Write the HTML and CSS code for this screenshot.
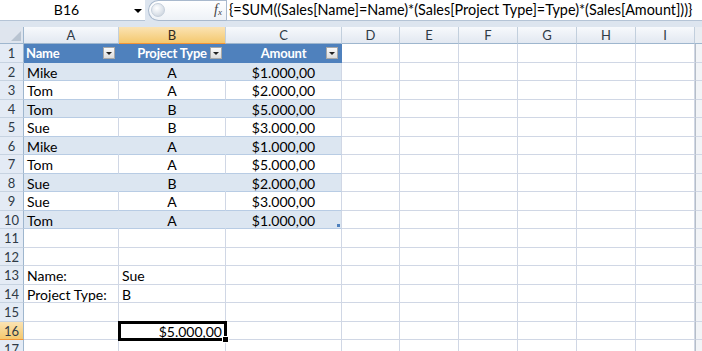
FILE: index.html
```html
<!DOCTYPE html>
<html lang="en">
<head>
  <meta charset="UTF-8" />
  <meta name="viewport" content="width=device-width, initial-scale=1.0"/>
  <title>Sales - SUM array formula</title>
  <link rel="stylesheet" href="styles.css">
</head>
<body>
  <div class="toolbar">
    <div class="formula-bar">
      <div class="name-box">
        <span class="name-text">B16</span>
        <span class="name-arrow"></span>
      </div>
      <div class="fx-box">
        <span class="fx-knob"></span>
        <span class="fx-label">f<sub>x</sub></span>
      </div>
      <div class="formula">{=SUM((Sales[Name]=Name)*(Sales[Project Type]=Type)*(Sales[Amount]))}</div>
    </div>
  </div>

  <div class="sheet" id="sheet"></div>

  <script>
    const COLS = ['A', 'B', 'C', 'D', 'E', 'F', 'G', 'H', 'I'];
    const sales = [
      ['Mike', 'A', '$1.000,00'],
      ['Tom', 'A', '$2.000,00'],
      ['Tom', 'B', '$5.000,00'],
      ['Sue', 'B', '$3.000,00'],
      ['Mike', 'A', '$1.000,00'],
      ['Tom', 'A', '$5.000,00'],
      ['Sue', 'B', '$2.000,00'],
      ['Sue', 'A', '$3.000,00'],
      ['Tom', 'A', '$1.000,00']
    ];
    const extra = {
      13: ['Name:', 'Sue'],
      14: ['Project Type:', 'B']
    };

    const sheet = document.getElementById('sheet');

    function cell(cls, text) {
      const div = document.createElement('div');
      div.className = cls;
      if (text !== undefined) div.textContent = text;
      sheet.appendChild(div);
      return div;
    }

    // kolom header
    cell('corner');
    COLS.forEach(c => cell(c === 'B' ? 'colhead active' : 'colhead', c));
    cell('colhead edge');

    for (let r = 1; r <= 17; r++) {
      cell(r === 16 ? 'rowhead active' : 'rowhead', r);

      if (r === 1) {
        ['Name', 'Project Type', 'Amount'].forEach((h, i) => {
          const th = cell('cell t-head ' + ['left', 'center', 'center'][i]);
          th.innerHTML = `<span>${h}</span><span class="filter"></span>`;
        });
      } else if (r <= 10) {
        const row = sales[r - 2];
        const band = r % 2 === 0 ? ' band' : '';
        cell('cell t-row left' + band, row[0]);
        cell('cell t-row center' + band, row[1]);
        const last = cell('cell t-row center t-last' + band, row[2]);
        if (r === 10) last.innerHTML += '<span class="resize"></span>';
      } else if (extra[r]) {
        cell('cell left', extra[r][0]);
        cell('cell left', extra[r][1]);
        cell('cell');
      } else if (r === 16) {
        cell('cell');
        cell('cell right selected', '$5.000,00').innerHTML += '<span class="handle"></span>';
        cell('cell');
      } else {
        cell('cell'); cell('cell'); cell('cell');
      }

      for (let i = 3; i < COLS.length; i++) cell('cell');
      cell('cell edge');
    }
  </script>
</body>
</html>
```

FILE: styles.css
```css
body {
  margin: 0;
  width: 702px;
  height: 351px;
  overflow: hidden;
  font-family: Lato, "Open Sans", sans-serif;
  font-size: 14px;
  background: #fff;
  color: #000;
}

/* formula bar */
.toolbar {
  background: #dde5ef;
  padding-bottom: 6px;
}

.formula-bar {
  display: flex;
  height: 21px;
}

.name-box {
  position: relative;
  width: 145px;
  background: #fff;
  border-bottom: 1px solid #b5c4d6;
  box-sizing: border-box;
}

.name-text {
  display: block;
  width: 133px;
  text-align: center;
  line-height: 20px;
}

.name-arrow {
  position: absolute;
  right: 3px;
  top: 9px;
  border-left: 4px solid transparent;
  border-right: 4px solid transparent;
  border-top: 4px solid #000;
}

.fx-box {
  position: relative;
  width: 78px;
  margin-left: 3px;
  box-sizing: border-box;
  border: 1px solid #a9b9cd;
  border-right: none;
  border-radius: 11px 0 0 11px;
  background: linear-gradient(#ffffff, #eef2f7);
}

.fx-knob {
  position: absolute;
  left: 2px;
  top: 2px;
  width: 14px;
  height: 14px;
  border-radius: 50%;
  background: radial-gradient(circle at 40% 35%, #ffffff 0, #e4e9ef 45%, #c3ccd7 100%);
  border: 1px solid #c5cfdb;
  box-sizing: border-box;
}

.fx-label {
  position: absolute;
  right: 4px;
  top: 1px;
  font-family: "Liberation Serif", serif;
  font-style: italic;
  font-size: 14px;
  color: #444;
}

.fx-label sub {
  font-size: 9px;
  vertical-align: -1px;
}

.formula {
  flex: 1;
  background: #fff;
  border-left: 1px solid #a9b9cd;
  border-bottom: 1px solid #b5c4d6;
  padding-left: 2px;
  font-size: 14.4px;
  line-height: 20px;
  white-space: nowrap;
  overflow: hidden;
}

/* sheet grid */
.sheet {
  display: grid;
  grid-template-columns: 24px 95px 107px 116px 58px 59px 59px 59px 59px 59px 7px;
  grid-template-rows: 17px;
  grid-auto-rows: 18.5px;
}

.corner {
  position: relative;
  background: #dfe5ee;
  border-right: 1px solid #9eb6ce;
  border-bottom: 1px solid #9eb6ce;
}

.corner::after {
  content: "";
  position: absolute;
  right: 2px;
  bottom: 2px;
  border-left: 10px solid transparent;
  border-bottom: 10px solid #b9c4d1;
}

.colhead {
  background: linear-gradient(#f7f9fc, #e2e8f1);
  border-right: 1px solid #c2cfdd;
  border-bottom: 1px solid #9eb6ce;
  text-align: center;
  font-size: 13px;
  line-height: 16px;
  color: #2f3a46;
}

.colhead.active {
  background: linear-gradient(#fbe3b3, #f4c86e);
  border-bottom-color: #f29536;
  color: #2f2a20;
}

.colhead.edge {
  border-right: none;
  background: #e9edf2;
}

.rowhead {
  background: #e4ebf5;
  border-right: 1px solid #9eb6ce;
  border-bottom: 1px solid #c7d3e1;
  text-align: center;
  font-size: 13px;
  line-height: 19px;
  color: #2f3a46;
}

.rowhead.active {
  background: linear-gradient(#fbe3b3, #f4c86e);
  border-bottom-color: #f29536;
}

.cell {
  position: relative;
  border-right: 1px solid #d0d7e5;
  border-bottom: 1px solid #d0d7e5;
  line-height: 19px;
  padding: 0 3px;
  white-space: nowrap;
  overflow: visible;
}

.cell.edge {
  border-right: none;
  border-left: 1px solid #b6bec8;
  background: #f2f4f7;
  padding: 0;
}

.left { text-align: left; }
.center { text-align: center; }
.right { text-align: right; }

/* table */
.t-head {
  background: #4f81bd;
  border-right-color: #4f81bd;
  border-bottom-color: #4f81bd;
  color: #fff;
  font-weight: bold;
  font-size: 13px;
  letter-spacing: -0.2px;
}

.t-head.left { padding-left: 2px; }

.filter {
  position: absolute;
  right: 3px;
  top: 3px;
  width: 12px;
  height: 12px;
  box-sizing: border-box;
  border: 1px solid #a8a8a8;
  background: linear-gradient(#fbfbfb, #dcdcdc);
}

.filter::after {
  content: "";
  position: absolute;
  left: 2px;
  top: 4px;
  border-left: 3px solid transparent;
  border-right: 3px solid transparent;
  border-top: 3px solid #222;
}

.t-row {
  border-bottom-color: #b8cce4;
}

.t-row.band {
  background: #dce6f1;
  border-right-color: #dce6f1;
}

.t-row.t-last {
  border-right-color: #d0d7e5;
}

.resize {
  position: absolute;
  right: 1px;
  bottom: 1px;
  width: 3px;
  height: 3px;
  background: #4f81bd;
}

.selected {
  outline: 3px solid #000;
  outline-offset: -2px;
  z-index: 1;
}

.handle {
  position: absolute;
  right: -4px;
  bottom: -4px;
  width: 5px;
  height: 5px;
  background: #000;
  border: 1px solid #fff;
}
```
